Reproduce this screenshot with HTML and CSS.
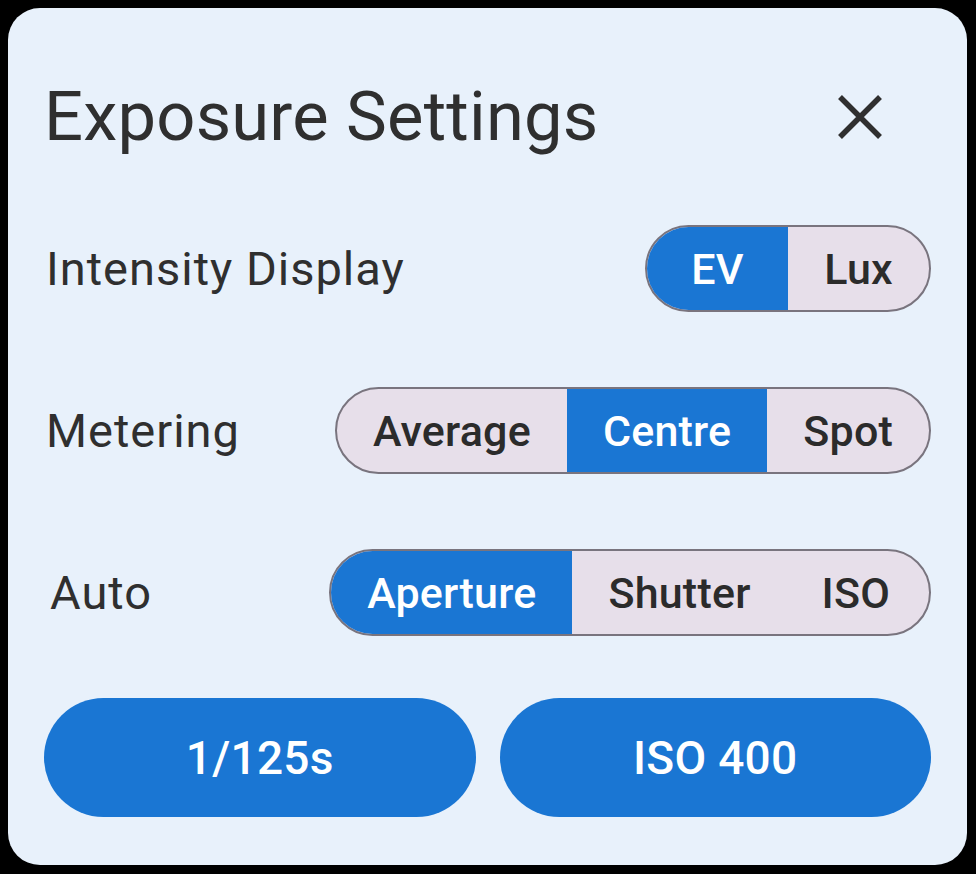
FILE: index.html
```html
<!DOCTYPE html>
<html lang="en">
<head>
<meta charset="utf-8">
<title>Exposure Settings</title>
<link rel="stylesheet" href="styles.css">
</head>
<body>
<div class="card">
  <div class="title-row">
    <h1 class="title">Exposure Settings</h1>
    <button class="close" aria-label="Close">
      <svg width="48" height="48" viewBox="0 0 48 48"><path d="M4 4 L44 44 M44 4 L4 44" stroke="#2f2f2f" stroke-width="5.5" stroke-linecap="butt" fill="none"/></svg>
    </button>
  </div>
  <div class="settings">
    <div class="row">
      <span class="label">Intensity Display</span>
      <div class="seg">
        <span class="opt on w143">EV</span>
        <span class="opt w143">Lux</span>
      </div>
    </div>
    <div class="row">
      <span class="label">Metering</span>
      <div class="seg">
        <span class="opt">Average</span>
        <span class="opt on">Centre</span>
        <span class="opt">Spot</span>
      </div>
    </div>
    <div class="row">
      <span class="label auto">Auto</span>
      <div class="seg">
        <span class="opt on">Aperture</span>
        <span class="opt">Shutter</span>
        <span class="opt iso">ISO</span>
      </div>
    </div>
  </div>
  <div class="actions">
    <button class="pill">1/125s</button>
    <button class="pill">ISO 400</button>
  </div>
</div>
</body>
</html>
```
FILE: styles.css
```css
html, body {
  margin: 0;
  padding: 0;
  background: #000;
  width: 976px;
  height: 874px;
  overflow: hidden;
}
body {
  padding: 8px;
  box-sizing: border-box;
  font-family: Roboto, "Liberation Sans", sans-serif;
}
.card {
  width: 959px;
  height: 857px;
  box-sizing: border-box;
  background: #e8f1fb;
  border-radius: 32px;
  padding: 66px 36px 48px 36px;
  display: flex;
  flex-direction: column;
}
.title-row {
  height: 86px;
  display: flex;
  align-items: center;
  justify-content: space-between;
}
.title {
  margin: 0;
  font-size: 68.7px;
  font-weight: 400;
  color: #2f2f2f;
  letter-spacing: 0.2px;
  line-height: 1;
}
.close {
  background: none;
  border: none;
  padding: 0;
  width: 48px;
  height: 48px;
  margin-right: 47px;
  display: flex;
}
.settings {
  margin-top: 65px;
  display: flex;
  flex-direction: column;
  gap: 75px;
}
.row {
  height: 87px;
  display: flex;
  align-items: center;
  justify-content: space-between;
}
.label {
  font-size: 47px;
  color: #2f2f2f;
  letter-spacing: 1px;
  padding-left: 2px;
}
.label.auto {
  padding-left: 6px;
}
.seg {
  height: 87px;
  box-sizing: border-box;
  border: 2px solid #79747e;
  border-radius: 44px;
  overflow: hidden;
  display: flex;
  background: #e7dfea;
}
.opt {
  display: flex;
  align-items: center;
  justify-content: center;
  padding: 0 36px;
  font-size: 43px;
  font-weight: 500;
  color: #2b2b2b;
  letter-spacing: 0.2px;
}
.opt.w143 {
  width: 141px;
  padding: 0;
}
.opt.iso {
  padding: 0 39px 0 35px;
}
.opt.on {
  background: #1a76d3;
  color: #fff;
}
.actions {
  margin-top: 62px;
  display: flex;
  gap: 24px;
}
.pill {
  flex: 1;
  height: 119px;
  border: none;
  border-radius: 60px;
  background: #1a76d3;
  color: #fff;
  font-family: Roboto, "Liberation Sans", sans-serif;
  font-size: 46px;
  font-weight: 500;
  letter-spacing: 0.3px;
}
```
